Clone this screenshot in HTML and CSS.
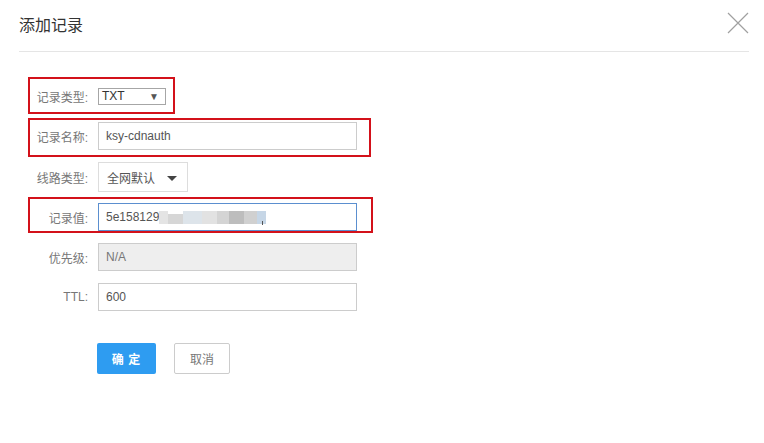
FILE: index.html
```html
<!DOCTYPE html>
<html lang="zh-CN">
<head>
  <meta charset="UTF-8" />
  <meta name="viewport" content="width=device-width, initial-scale=1.0" />
  <title>添加记录</title>
  <link rel="stylesheet" href="styles.css">
</head>
<body>
  <div class="dialog">
    <div class="dialog-header">
      <span class="dialog-title">添加记录</span>
      <span class="close-btn">
        <svg width="22" height="22" viewBox="0 0 22 22">
          <path d="M1 1 L21 21 M21 1 L1 21" stroke="#a0a0a0" stroke-width="1.2" fill="none" />
        </svg>
      </span>
    </div>

    <div class="form">
      <div class="row row-select">
        <span class="mark mark-1"></span>
        <label>记录类型:</label>
        <div class="select-box"><span>TXT</span><span class="select-arrow">▼</span></div>
      </div>

      <div class="row">
        <span class="mark mark-2"></span>
        <label>记录名称:</label>
        <div class="input">ksy-cdnauth</div>
      </div>

      <div class="row row-line">
        <label>线路类型:</label>
        <div class="dropdown"><span>全网默认</span><span class="caret"></span></div>
      </div>

      <div class="row">
        <span class="mark mark-3"></span>
        <label>记录值:</label>
        <div class="input input-focus">5e158129<span class="blur">
          <i class="b1"></i><i class="b2"></i><i class="b3"></i><i class="b4"></i><i class="b5"></i><i class="b6"></i><i class="b7"></i><i class="b8"></i>
        </span><span class="cursor"></span></div>
      </div>

      <div class="row">
        <label>优先级:</label>
        <div class="input input-disabled">N/A</div>
      </div>

      <div class="row">
        <label>TTL:</label>
        <div class="input">600</div>
      </div>

      <div class="actions">
        <button class="btn btn-primary">确 定</button>
        <button class="btn btn-default">取消</button>
      </div>
    </div>
  </div>
</body>
</html>
```

FILE: styles.css
```css
body {
  margin: 0;
  background-color: #fff;
  font-family: "Microsoft YaHei", "Liberation Sans", "Noto Sans CJK SC", sans-serif;
  color: #333;
}
.dialog {
  width: 764px;
  height: 443px;
}
.dialog-header {
  margin: 0 15px 0 19px;
  height: 51px;
  border-bottom: 1px solid #e5e5e5;
  display: flex;
  align-items: center;
  justify-content: space-between;
}
.dialog-title {
  font-size: 16px;
  color: #333;
  margin-top: -4px;
}
.close-btn {
  display: flex;
  margin-top: -5px;
}
.form {
  padding-top: 30px;
}
.row {
  position: relative;
  display: flex;
  align-items: center;
  width: fit-content;
  height: 28px;
  margin-bottom: 12px;
}
.row-line {
  height: 30px;
  margin-bottom: 11px;
}
.row label {
  width: 88px;
  text-align: right;
  font-size: 12px;
  color: #777;
  margin-right: 10px;
}
.mark {
  position: absolute;
  left: 28px;
  border: 2px solid #d3111a;
  pointer-events: none;
}
.mark-1 {
  top: -5px;
  bottom: -4px;
  right: -9px;
}
.mark-2 {
  top: -4px;
  bottom: -7px;
  right: -14px;
}
.mark-3 {
  top: -6px;
  bottom: -2px;
  right: -16px;
}
.select-box {
  box-sizing: border-box;
  width: 68px;
  height: 17px;
  border: 1px solid #a6a6a6;
  display: flex;
  align-items: center;
  justify-content: space-between;
  padding: 0 6px 0 3px;
  font-size: 12px;
  font-family: "Liberation Sans", Arial, sans-serif;
  color: #333;
}
.select-arrow {
  font-size: 10px;
  color: #555;
}
.input {
  box-sizing: border-box;
  width: 259px;
  height: 28px;
  border: 1px solid #ccc;
  padding: 0 7px;
  display: flex;
  align-items: center;
  font-size: 12px;
  font-family: "Liberation Sans", Arial, sans-serif;
  color: #555;
}
.input-focus {
  border-color: #5b8fcf;
}
.input-disabled {
  background-color: #eee;
  color: #777;
}
.dropdown {
  box-sizing: border-box;
  width: 90px;
  height: 30px;
  border: 1px solid #ddd;
  display: flex;
  align-items: center;
  padding: 0 10px 0 8px;
  justify-content: space-between;
  font-size: 12px;
  color: #555;
}
.caret {
  width: 0;
  height: 0;
  border-left: 5px solid transparent;
  border-right: 5px solid transparent;
  border-top: 5px solid #444;
  margin-top: 2px;
}
.blur {
  display: flex;
  align-items: center;
  height: 16px;
}
.blur i {
  display: block;
  height: 13px;
}
.b1 { width: 9px; background: #e4e4e4; }
.b2 { width: 15px; background: #d6d6d6; height: 10px !important; margin-top: 4px; }
.b3 { width: 19px; background: #dde4ea; }
.b4 { width: 15px; background: #e2e2e2; }
.b5 { width: 12px; background: #d4d4d4; }
.b6 { width: 15px; background: #bdbdbd; }
.b7 { width: 13px; background: #d0d0d0; }
.b8 { width: 9px; background: #c6d6e6; }
.cursor {
  display: block;
  width: 1px;
  height: 4px;
  background: #555;
  margin: 12px 0 0 -4px;
}
.actions {
  display: flex;
  gap: 18px;
  margin-left: 97px;
  margin-top: 32px;
}
.btn {
  height: 31px;
  border-radius: 2px;
  font-size: 12px;
  font-family: "Microsoft YaHei", "Noto Sans CJK SC", sans-serif;
  cursor: pointer;
  padding: 0;
}
.btn-primary {
  width: 59px;
  border: none;
  background-color: #2e9cf1;
  color: #fff;
  font-weight: bold;
  letter-spacing: 1px;
}
.btn-default {
  width: 56px;
  border: 1px solid #ccc;
  background-color: #fff;
  color: #777;
}
```
